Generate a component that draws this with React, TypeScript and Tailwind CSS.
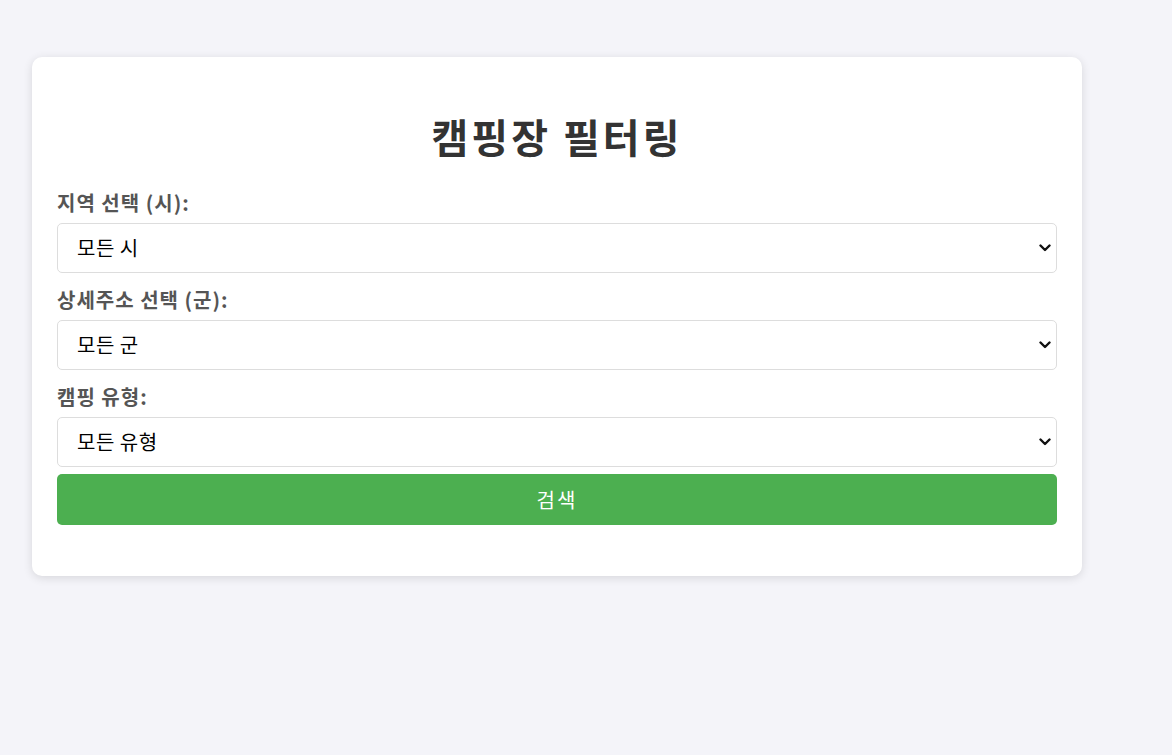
import React from "react";

const font = { fontFamily: '"Noto Sans CJK KR", "Noto Sans", sans-serif' };

function Field({ label, value }: { label: string; value: string }) {
  return (
    <div className="flex flex-col">
      <label className="block text-[20px] leading-[28px] font-bold tracking-[1px] text-[#555] mb-[6px]">{label}</label>
      <div className="relative">
        <select
          defaultValue={value}
          className="h-[50px] w-full appearance-none rounded-[5px] border border-[#dddddd] bg-white pl-[19px] pr-[30px] text-[20px] tracking-[0.5px] text-black"
          style={font}
        >
          <option>{value}</option>
        </select>
        <svg
          className="pointer-events-none absolute right-[6px] top-[21px]"
          width="12"
          height="8"
          viewBox="0 0 12 8"
          fill="none"
        >
          <path d="M1.5 1.5 L6 6 L10.5 1.5" stroke="#111" strokeWidth="2.4" strokeLinecap="round" strokeLinejoin="round" />
        </svg>
      </div>
    </div>
  );
}

export default function App() {
  return (
    <div className="min-h-[755px] w-full bg-[#f4f4f9] pt-[57px] pl-[32px]" style={font}>
      <div className="w-[1050px] rounded-[10px] bg-white px-[25px] pt-[25px] pb-[51px] shadow-[0_2px_10px_rgba(0,0,0,0.12)]">
        <h1 className="mt-[30px] mb-[29px] text-center text-[40px] leading-[48px] font-bold tracking-[3px] text-[#333]">캠핑장 필터링</h1>
        <div className="flex flex-col gap-[13px]">
          <Field label="지역 선택 (시):" value="모든 시" />
          <Field label="상세주소 선택 (군):" value="모든 군" />
          <Field label="캠핑 유형:" value="모든 유형" />
        </div>
        <button
          className="mt-[7px] h-[51px] w-full rounded-[5px] bg-[#4caf50] text-[20px] tracking-[2px] text-white"
          style={font}
        >
          검색
        </button>
      </div>
    </div>
  );
}
